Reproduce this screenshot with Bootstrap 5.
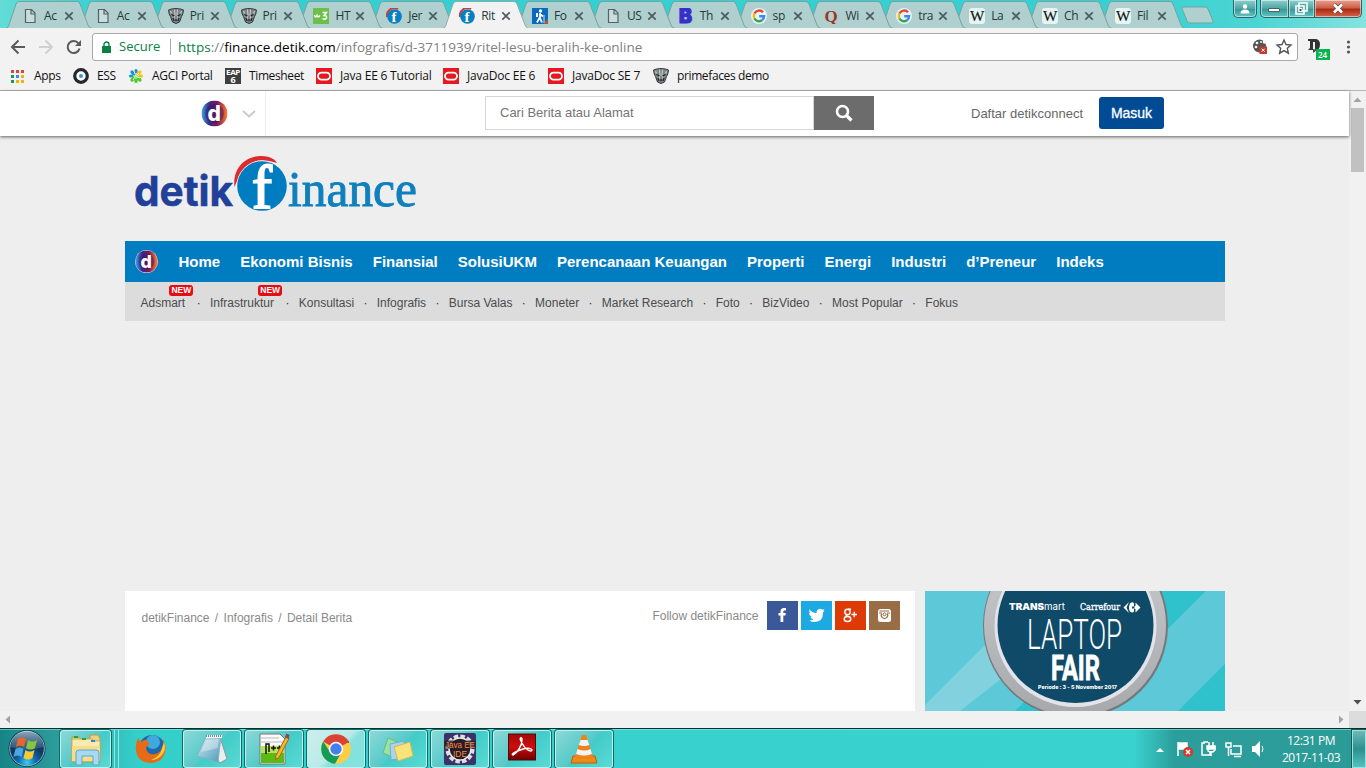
<!DOCTYPE html>
<html lang="id">
<head>
<meta charset="utf-8">
<title>Ritel Lesu, Beralih ke Online</title>
<link href="https://cdn.jsdelivr.net/npm/bootstrap@5.3.0/dist/css/bootstrap.min.css" rel="stylesheet">
<style>
html,body{height:100%;overflow:hidden}
body{font-family:"Liberation Sans",Arial,sans-serif;font-size:12px;line-height:1.2;width:1366px;height:768px;background:#eee}
svg{display:block;flex:none}
.ui{font-family:"Open Sans","Noto Sans",sans-serif}
/* tab strip */
.strip{height:28px;background:linear-gradient(90deg,#62dcd6 0,#35cfcf 8%,#36d0d2 80%,#4ad5d3 92%,#86e2df 100%);padding-left:6px;flex:none}
.btab{width:72.87px;height:28px;position:relative;isolation:isolate;flex:none;font-size:12px;letter-spacing:-.35px;color:#27393b;padding-left:16px}
.btab .shape{position:absolute;left:0;top:0;z-index:-1}
.btab .ttl{width:16px;margin-left:6px;white-space:nowrap}
.btab .x{margin-left:4px}
.wctl{height:18px;border:1px solid #276567;border-top:0;border-radius:0 0 5px 5px;box-shadow:inset 0 0 0 1px #ffffff80;background:linear-gradient(#8fcfce,#4da6a6 50%,#3a9797 55%,#62c4c3)}
.wctl.red{background:linear-gradient(#e9a08f,#cf6048 45%,#a92d12 55%,#d8634a)}
/* toolbar */
.toolbar{height:34px;background:#f2f2f2;flex:none}
.omni{width:1206px;height:28px;margin-left:10px;border:1px solid #a9a9a9;border-radius:3px;background:#fff;font-size:13.5px}
.sec{color:#0b8043;font-size:13px}
.url{color:#808080;letter-spacing:.01px;white-space:nowrap}
.bookmarks{height:29px;background:#f2f2f2;border-bottom:1px solid #b5b5b5;color:#111;flex:none;padding-left:10px;font-size:12px;letter-spacing:-.38px;white-space:nowrap}
.bookmarks .wide{letter-spacing:-.2px}
/* page */
.viewport{height:620px}
.page-area{width:1349px;background:#eee}
.topbar{height:45px;background:#fff;box-shadow:0 1px 3px #0009;position:relative;flex:none}
.brandbox{width:66px;margin-left:200px;border-right:1px solid #eee}
.searchbox{width:329px;height:34px;margin-left:219px;border:1px solid #d6d6d6;color:#757575;font-size:13px;padding-left:14px;margin-bottom:1px}
.searchbtn{width:60px;height:34px;background:#6c6c6c;margin-bottom:1px}
.masuk{width:65px;height:32px;margin-bottom:1px;background:#004b93;border-radius:3px;color:#fff;font-size:14px;-webkit-text-stroke:.3px #fff}
.wrap{width:1100px;margin-left:125px}
.mainnav{height:41px;background:#007dc1;color:#fff;font-size:15px;font-weight:700;padding-left:10px}
.subnav{height:39px;background:#dcdcdc;color:#4b4b4b;padding-left:15.5px;padding-top:4px}
.subnav .dot{width:22.6px;text-align:center;color:#333}
.hasnew{padding-right:2.2px}
.newtag{position:absolute;right:-6px;top:-11px;width:24px;height:11px;border-radius:3px;background:#e50c12;color:#fff;font-size:8.5px;line-height:11px;text-align:center}
.panel{width:790px;height:120px;background:#fff;padding:10px 15px 0 16.5px;color:#8a8a8a}
.soc{width:31px;height:29px}
.vbar{width:17px;background:#f1f1f1}
.vthumb{width:13px;height:64px;background:#c1c1c1}
.hbar{height:17px;background:#f1f1f1;flex:none}
/* taskbar */
.taskbar{height:40px;flex:none;border-top:1px solid #08312f;box-shadow:inset 0 1px #a3efec88;background:linear-gradient(90deg,#178586 0,#2c9b9a 4%,#35cfca 10%,#3ad2cf 83%,#2b9e9b 86%,#2c9b98 100%)}
.tb{width:58px;height:38px;border:1px solid #bff1ee;border-radius:3px;box-shadow:0 0 0 1px #0c6d6b;background:linear-gradient(135deg,#8bd9d7,#56cac9 48%,#42cbc8 52%,#5adad5);margin-right:4px;flex:none}
.tb.on{background:linear-gradient(135deg,#cdeeec,#b9ebe8 50%,#86e0dc 60%,#7fe5e0)}
.tb.plain{border-color:transparent;background:none;box-shadow:none}
.clock{width:80px;color:#fff;text-align:center;line-height:17px;letter-spacing:-.45px}
.peek{width:14px;height:38px;border:1px solid #9fe0dd;box-shadow:0 0 0 1px #135d5b;background:linear-gradient(#6bb9b7,#2b908e 50%,#52c3bf)}
</style>
</head>
<body class="d-flex flex-column">
<svg width="0" height="0" class="position-absolute">
<defs>
<linearGradient id="dg"><stop offset="0" stop-color="#35a3ef"/><stop offset=".3" stop-color="#3a2a86"/><stop offset=".6" stop-color="#7b1757"/><stop offset="1" stop-color="#ff7d2d"/></linearGradient>
<linearGradient id="ring" x2="0" y2="1"><stop offset="0" stop-color="#c9cbce"/><stop offset=".5" stop-color="#b9bbbe"/><stop offset="1" stop-color="#a6a8ab"/></linearGradient>
<radialGradient id="orb" cy=".9"><stop offset="0" stop-color="#36d2f6"/><stop offset=".5" stop-color="#0e6bb0"/><stop offset="1" stop-color="#12385f"/></radialGradient>
<linearGradient id="glass" x2="0" y2="1"><stop offset="0" stop-color="#e8f4f6" stop-opacity=".85"/><stop offset="1" stop-color="#8bb7c6" stop-opacity=".3"/></linearGradient>
<linearGradient id="pdfg" x2="0" y2="1"><stop offset="0" stop-color="#9e0b0b"/><stop offset=".5" stop-color="#d00c0c"/><stop offset="1" stop-color="#6e0000"/></linearGradient>
<linearGradient id="npg" x2="1" y2="1"><stop offset="0" stop-color="#d3ecf3"/><stop offset="1" stop-color="#4d9ab8"/></linearGradient>
<symbol id="doc" viewBox="0 0 16 16"><path d="M3.500 1.500h6l3.500 3.500v9.500h-9.500zM9 2v4h4" fill="#c8dddd" stroke="#566264" stroke-width="1.200"/></symbol>
<symbol id="prime" viewBox="0 0 16 16"><path d="M.5 2l3-1L8 .5l4.500.5 3 1-.7 4-1.300 2.500-2 5.500L8 15.500 4.500 14l-2-5.500L1.200 6z" fill="#7d8486" stroke="#33393b" stroke-width="1"/><path d="M2 3l2 1-1 2zM14 3l-2 1 1 2z" fill="#d5dada"/><path d="M6.500 1.500L7 7l-1.500 5M9.500 1.500L9 7l1.500 5" stroke="#cfd4d4" fill="none"/><path d="M3.500 6.500l3 1.500M12.500 6.500l-3 1.500M5 10l1 3M11 10l-1 3" stroke="#1d2122" fill="none" stroke-width="1.200"/><path d="M6.800 11.500h2.400L8 13.500z" fill="#111"/></symbol>
<symbol id="w3" viewBox="0 0 16 16"><path d="M0 0h16v16H0z" fill="#6cc04a"/><path d="M1.500 7q.5 3.500 2.500.5.500 3 3 0M9.500 4.500h4l-2.500 3q3 0 2.500 2.200-1 2.500-4 1" fill="none" stroke="#fff" stroke-width="1.500"/></symbol>
<symbol id="fin" viewBox="0 0 16 16"><path d="M1 9A7.500 7.500 0 0 1 12 1" stroke="#d93636" fill="none" stroke-width="2"/><circle cx="8.500" cy="8.500" r="7.300" fill="#087fc0"/><text x="5.500" y="14" font-family="Liberation Serif" font-weight="700" font-size="15" fill="#fff">f</text></symbol>
<symbol id="hike" viewBox="0 0 16 16"><path d="M0 0h16v16H0z" fill="#096bc0"/><path d="M11 16l5-5v5z" fill="#a65c31"/><circle cx="8.500" cy="3" r="1.700" fill="#fff"/><path d="M8 5v5l2 4.500M8 9l-3 5.500M8 6l3 2.500" fill="none" stroke="#fff" stroke-width="1.800"/><path d="M12 7v8" stroke="#fff" stroke-width=".8"/><path d="M4 5h2v4H4z" fill="#fff"/></symbol>
<symbol id="B" viewBox="0 0 16 16"><text x="1" y="15.200" font-family="Inter" font-weight="900" font-size="19.500" fill="#3530c9" stroke="#3530c9">B</text></symbol>
<symbol id="G" viewBox="0 0 16 16"><circle cx="8" cy="8" r="8" fill="#e6f4f3"/><g fill="none" stroke-width="2.400"><path d="M12 4.200A5.200 5.200 0 0 0 3.400 5.600" stroke="#e84436"/><path d="M3.400 5.600A5.400 5.400 0 0 0 3.400 10.500" stroke="#f7b90b"/><path d="M3.400 10.500A5.200 5.200 0 0 0 11 12.300" stroke="#35a553"/><path d="M11 12.300A5 5 0 0 0 13.100 8.300H8.200" stroke="#4385f4"/></g></symbol>
<symbol id="Q" viewBox="0 0 16 16"><text x="1.500" y="13.500" font-family="Liberation Serif" font-weight="700" font-size="17" fill="#9b3528">Q</text></symbol>
<symbol id="W" viewBox="0 0 16 16"><rect width="16" height="16" rx="3" fill="#e4f5f4"/><text x="1" y="12.800" textLength="14" lengthAdjust="spacingAndGlyphs" font-family="Liberation Serif" font-size="14" fill="#111" stroke="#111" stroke-width=".15">W</text></symbol>
<symbol id="X" viewBox="0 0 10 10"><path d="M1.300 1.300l7.400 7.400M8.700 1.300L1.300 8.700" stroke="#4c5b5d" stroke-width="1.700"/></symbol>
<symbol id="ora" viewBox="0 0 16 16"><path d="M0 0h16v16H0z" fill="#e5191f"/><rect x="2" y="4.600" width="12" height="7" rx="3.500" fill="none" stroke="#fff" stroke-width="1.800"/></symbol>
<symbol id="dlogo" viewBox="0 0 26 26"><circle cx="13" cy="13" r="13" fill="url(#dg)"/><circle cx="13" cy="13" r="9.500" fill="#36145f" opacity=".45"/><text x="6" y="20.500" font-family="Inter" font-weight="800" font-size="21" fill="#fff">d</text></symbol>
</defs></svg>

<div class="strip ui d-flex" id="strip">
  <svg class="order-last" width="36" height="28" style="margin-left:7px"><path d="M3 8.500q-1-1.500 1-1.500h22q2 0 3 2l5 12q1 2-1.500 2H11q-2 0-3-2z" fill="#b0d0cf" stroke="#6da5a4"/></svg>
  <div class="d-flex order-last" style="margin-left:18px">
    <div class="wctl d-flex justify-content-center align-items-center" style="width:24px"><svg width="10" height="11"><circle cx="5" cy="3.500" r="2.200" fill="#fff"/><path d="M.5 10.500q0-4 4.500-4t4.500 4z" fill="#fff"/></svg></div>
    <div class="wctl d-flex justify-content-center align-items-center rounded-end-0" style="width:29px;margin-left:3px"><svg width="12" height="9"><path d="M.5 4.500h11v3H.5z" fill="#fff" stroke="#466"/></svg></div>
    <div class="wctl d-flex justify-content-center align-items-center rounded-0" style="width:27px;margin-left:-1px"><svg width="13" height="13"><path d="M4 1h8v8H4zM1 4h8v8H1z" fill="#5cabab" stroke="#fff" stroke-width="1.600"/><path d="M4 6.500h3v3H4z" fill="#355" stroke="#fff"/></svg></div>
    <div class="wctl red d-flex justify-content-center align-items-center rounded-start-0" style="width:48px;margin-left:-1px"><svg width="12" height="11"><path d="M2 1.500l8 8M10 1.500l-8 8" stroke="#655" stroke-width="4"/><path d="M2 1.500l8 8M10 1.500l-8 8" stroke="#fff" stroke-width="2.500"/></svg></div>
  </div>
</div>

<div class="toolbar ui d-flex align-items-center pt-1">
  <svg width="82" height="28"><g fill="none" stroke-width="2"><path d="M25 14H12m6.500-6.500L12 14l6.500 6.500" stroke="#5a5a5a"/><path d="M39 14h13m-6.500-6.500L52 14l-6.500 6.500" stroke="#d0d0d0"/><path d="M78.500 10.500A6 6 0 1 0 79.500 15.500" stroke="#5a5a5a"/></g><path d="M81 7v6h-6z" fill="#5a5a5a"/></svg>
  <div class="omni d-flex align-items-center">
    <svg width="9" height="12" style="margin-left:9px"><path d="M0 5h9v7H0z" fill="#0b8043"/><path d="M2 6V3.500a2.500 2.500 0 0 1 5 0V6" fill="none" stroke="#0b8043" stroke-width="1.400"/></svg>
    <span class="sec" style="margin-left:8px;width:51px">Secure</span><span style="width:1px;height:16px;background:#aaa"></span>
    <span class="url" style="margin-left:7px"><span style="color:#0b8043">https</span>://<span class="text-black">finance.detik.com</span>/infografis/d-3711939/ritel-lesu-beralih-ke-online</span>
    <svg class="ms-auto" width="45" height="18" viewBox="0 0 45 18"><circle cx="7.500" cy="8" r="6.500" fill="#555"/><g fill="#f5f5f5"><circle cx="5" cy="5" r="1.300"/><circle cx="9" cy="4" r="1"/><circle cx="4" cy="9" r="1.300"/><circle cx="12.500" cy="4" r="1.800"/></g><path d="M7.500 8.500h7.500v7.500H7.500z" fill="#c6392f"/><path d="M9.700 10.700l3 3m0-3l-3 3" stroke="#fff"/><path d="M32 2l2 4.500 5 .5-3.700 3.300 1.100 4.900L32 12.600l-4.400 2.600 1.100-4.900L25 7l5-.5z" fill="none" stroke="#555" stroke-width="1.400"/></svg>
  </div>
  <svg width="66" height="30"><path d="M10 7h7q5 0 5 5.500t-5 5.500v-8h-2v8h-5l2-2v-7h-2z" fill="#333"/><path d="M15 17v4l4-3z" fill="#444"/><rect x="18" y="17" width="14" height="11" fill="#09b34d"/><text x="20" y="26" font-size="8" fill="#fff" font-weight="600">24</text><g fill="#555"><circle cx="50.500" cy="10" r="1.600"/><circle cx="50.500" cy="15" r="1.600"/><circle cx="50.500" cy="20" r="1.600"/></g></svg>
</div>

<div class="bookmarks ui d-flex align-items-center">
  <svg width="14" height="14"><g fill="#dc4437"><path d="M1 1h3v3H1zM6 1h3v3H6zM11 1h3v3h-3z"/></g><path d="M1 6h3v3H1z" fill="#109d58"/><path d="M6 6h3v3H6z" fill="#4385f4"/><path d="M11 6h3v3h-3zM6 11h3v3H6zM11 11h3v3h-3z" fill="#f4b400"/><path d="M1 11h3v3H1z" fill="#109d58"/></svg><span style="width:39px;margin-left:10px">Apps</span>
  <svg width="16" height="16"><circle cx="8" cy="8" r="6.300" fill="#fff" stroke="#24272b" stroke-width="3.200"/><circle cx="8" cy="8" r="2" fill="#3596dd"/></svg><span style="width:31px;margin-left:8px">ESS</span>
  <svg width="16" height="16"><g fill="none" stroke-width="3.200" stroke-linecap="round"><path d="M8 8V2.500M8 8L4 4" stroke="#2589dd"/><path d="M8 8H2.500" stroke="#169be0"/><path d="M8 8l4-4M8 8h5.500" stroke="#efc81c"/><path d="M8 8v5.500M8 8l-4 4M8 8l4 4" stroke="#4fc72f"/></g><path d="M8 5v6M5 8h6M6 3l1 3M11 5l-2 2M5 12l2-3M12 10l-3-1" stroke="#f1ffe0" stroke-width=".9"/></svg><span style="width:73px;margin-left:8px;letter-spacing:-.28px">AGCI Portal</span>
  <svg width="16" height="16"><path d="M0 0h16v16H0z" fill="#3e3e3e"/><text x="1" y="7" textLength="14" lengthAdjust="spacingAndGlyphs" font-size="7" font-weight="700" fill="#fff">EAP</text><text x="5.500" y="15" font-size="9" font-weight="700" fill="#fff">6</text></svg><span style="width:67px;margin-left:8px">Timesheet</span>
  <svg width="16" height="16"><use href="#ora"/></svg><span class="wide" style="width:103px;margin-left:8px">Java EE 6 Tutorial</span>
  <svg width="16" height="16"><use href="#ora"/></svg><span class="wide" style="width:81px;margin-left:8px">JavaDoc EE 6</span>
  <svg width="16" height="16"><use href="#ora"/></svg><span class="wide" style="width:81px;margin-left:8px">JavaDoc SE 7</span>
  <svg width="16" height="16"><use href="#prime"/></svg><span style="margin-left:8px">primefaces demo</span>
</div>

<div class="viewport d-flex flex-grow-0 flex-shrink-0">
  <div class="page-area d-flex flex-column">
    <header class="topbar d-flex align-items-center">
      <div class="brandbox d-flex align-items-center h-100"><svg width="28" height="27" viewBox="-1.500 -.5 28 27"><use href="#dlogo" width="26" height="26"/></svg><svg width="14" height="9" style="margin-left:14px"><path d="M1 2l6 5.500L13 2" fill="none" stroke="#c9c9c9" stroke-width="1.800"/></svg></div>
      <div class="searchbox d-flex align-items-center">Cari Berita atau Alamat</div>
      <div class="searchbtn d-flex align-items-center justify-content-center"><svg width="18" height="18"><circle cx="7.500" cy="7.500" r="5.500" fill="none" stroke="#fff" stroke-width="2.600"/><path d="M11.500 11.500l5 5" stroke="#fff" stroke-width="3.200"/></svg></div>
      <span style="font-size:13px;color:#666;margin-left:97px;width:128px">Daftar detikconnect</span>
      <div class="masuk d-flex align-items-center justify-content-center">Masuk</div>
    </header>
    <main class="wrap">
      <svg width="300" height="105"><text x="9" y="70" font-family="Inter" font-weight="700" font-size="41.500" textLength="99" lengthAdjust="spacingAndGlyphs" fill="#20409a" stroke="#20409a" stroke-width=".5">detik</text>
        <path d="M109.500 51C107 30 124 16 144 21Q150 23 152 27Q122 17 112 45z" fill="#dc2b2e"/><circle cx="137" cy="50" r="25.500" fill="#eee"/><circle cx="137" cy="50" r="24.800" fill="#007dc1"/><text x="127" y="72" font-family="Liberation Serif" font-size="62" textLength="20" lengthAdjust="spacingAndGlyphs" fill="#fff" stroke="#fff" stroke-width="2">f</text>
        <text x="163" y="70" font-family="Liberation Serif" font-size="50" textLength="129" lengthAdjust="spacingAndGlyphs" fill="#0f80bd" stroke="#0f80bd" stroke-width=".9">inance</text></svg>
      <nav class="mainnav d-flex align-items-center">
        <svg width="23" height="23" style="margin-right:20.500px"><circle cx="11.500" cy="11.500" r="11.500" fill="#dcb7d3"/><use href="#dlogo" x=".5" y=".5" width="22" height="22"/></svg>
        <div class="d-flex" style="gap:20px"><span>Home</span><span>Ekonomi Bisnis</span><span>Finansial</span><span>SolusiUKM</span><span>Perencanaan Keuangan</span><span>Properti</span><span>Energi</span><span>Industri</span><span>d’Preneur</span><span>Indeks</span></div>
      </nav>
      <nav class="subnav d-flex align-items-center">
        <span class="hasnew position-relative">Adsmart<b class="newtag">NEW</b></span><span class="dot">·</span><span class="hasnew position-relative">Infrastruktur<b class="newtag">NEW</b></span><span class="dot">·</span><span>Konsultasi</span><span class="dot">·</span><span>Infografis</span><span class="dot">·</span><span>Bursa Valas</span><span class="dot">·</span><span>Moneter</span><span class="dot">·</span><span>Market Research</span><span class="dot">·</span><span>Foto</span><span class="dot">·</span><span>BizVideo</span><span class="dot">·</span><span>Most Popular</span><span class="dot">·</span><span>Fokus</span>
      </nav>
      <div class="d-flex justify-content-between" style="margin-top:270px">
        <section class="panel d-flex align-items-start">
          <div style="padding-top:10px;word-spacing:2px">detikFinance / <span style="word-spacing:0">Infografis</span> / <span style="word-spacing:0">Detail Berita</span></div>
          <div class="d-flex ms-auto" style="gap:3px"><span style="padding:8px 5.500px 0 0">Follow detikFinance</span>
            <svg class="soc" style="background:#3b5998"><path d="M13.500 21v-6.500H11.500V12h2v-1.500q0-3.500 3.500-3.500h2v2.500h-1.500q-1.200 0-1.200 1.200V12h2.500l-.4 2.500h-2.100V21z" fill="#fff"/></svg>
            <svg class="soc" style="background:#1da9e1"><path d="M8.500 8.500q3 3.500 7 3.500 0-4 3.500-4.300 1.500 0 2.500 1l2-.8-1.200 2 1.200-.2-1.500 1.700q.2 9.200-8.500 9.600-3 0-5.200-1.500 2.600 0 4.200-1.300-2.400-.3-3-2.300h1.300Q8 14.500 8 12l1.300.3Q7.500 10.500 8.500 8.500z" fill="#fff"/></svg>
            <svg class="soc" style="background:#de3a06"><g fill="none" stroke="#fff" stroke-width="1.400"><circle cx="12.500" cy="11" r="2.700"/><ellipse cx="12.500" cy="18" rx="3.300" ry="2.500"/><path d="M13 8.200h3M13 13.500q-3 .5-1 2M16.500 13.500H22M19.300 10.800v5.500"/></g></svg>
            <svg class="soc" style="background:#996e44"><rect x="9" y="8" width="13" height="13" rx="2.500" fill="#fff"/><path d="M10 12h3M18 12h3M10.500 10h9.500" stroke="#996e44" stroke-width="1.100"/><path d="M12.800 12.500a3.200 3.200 0 1 0 5.400 0" fill="none" stroke="#996e44" stroke-width="1.200"/><circle cx="15.500" cy="13.300" r="1.500" fill="none" stroke="#996e44"/></svg>
          </div>
        </section>
        <svg width="300" height="120"><path d="M0 0h300v120H0z" fill="#5cc8d8"/><path d="M0 114L114 0h75L35 120H0z" fill="#82d1de"/><path d="M90 120L210 0h71L160 120z" fill="#2fc1cc"/><path d="M281 0h19v73l-47 47h-93z" fill="#5cc8d8"/><path d="M300 73v47h-47z" fill="#2fc1cc"/>
          <circle cx="150.500" cy="34.500" r="92.500" fill="#77787b"/><circle cx="150" cy="34" r="91" fill="url(#ring)"/><circle cx="150.500" cy="35" r="81" fill="#e2e4ea"/><circle cx="150.500" cy="34" r="78" fill="#0f4b68"/>
          <g fill="#fff"><text x="84" y="19" font-family="Inter" font-size="9.500" textLength="56" lengthAdjust="spacingAndGlyphs"><tspan font-weight="900">TRANS</tspan>mart</text><text x="155" y="19" font-family="DejaVu Serif" font-size="8.500" textLength="40" lengthAdjust="spacingAndGlyphs" stroke="#fff" stroke-width=".3">Carrefour</text>
          <path d="M204 11l-5.500 5.500 5.500 5.500-2.500-5.500zM205 12.500q2.500-2.500 4 0v3h-2v2h2v3q-1.500 2-4 0-2-4 0-8zM210.500 11.500l5 5-5 5v-3.500h-1v-3h1z"/>
          <text x="102" y="58" font-family="Roboto" font-weight="300" font-size="42" textLength="95" lengthAdjust="spacingAndGlyphs">LAPTOP</text>
          <text x="126" y="89" font-family="Roboto" font-weight="700" font-size="35.500" textLength="49" lengthAdjust="spacingAndGlyphs" stroke="#fff" stroke-width=".8">FAIR</text>
          <text x="113" y="98" font-family="Inter" font-weight="800" font-size="5.200" textLength="79" lengthAdjust="spacingAndGlyphs">Periode : 3 - 5 November 2017</text></g></svg>
      </div>
    </main>
  </div>
  <div class="vbar d-flex flex-column align-items-center"><svg width="17" height="17"><path d="M4.500 11h8l-4-4.500z" fill="#a3a3a3"/></svg><div class="vthumb"></div><svg class="mt-auto" width="17" height="17"><path d="M4.500 6h8l-4 4.500z" fill="#505050"/></svg></div>
</div>
<div class="hbar d-flex justify-content-between"><svg width="17" height="17"><path d="M10 4.500v8L5.500 8.500z" fill="#a3a3a3"/></svg><div class="d-flex"><svg width="17" height="17"><path d="M7 4.500v8l4.500-4z" fill="#a3a3a3"/></svg><span style="width:17px;background:#dcdcdc"></span></div></div>

<div class="taskbar d-flex align-items-center">
  <svg width="60" height="39"><circle cx="27" cy="19.500" r="18.500" fill="#0b3050"/><circle cx="27" cy="19.500" r="17.300" fill="url(#orb)" stroke="#8fb9cb"/><path d="M11 18a16 16 0 0 1 32 0q-16 5-32 0z" fill="url(#glass)" opacity=".7"/><path d="M18 10q4-3 8 0l-2 8q-4-3-8 0z" fill="#ed632c"/><path d="M28 11q4 3 9 0l-2 8q-4 3-9 0z" fill="#87c440"/><path d="M15.500 20q4-3 8 0l-2 8q-4-3-8 0z" fill="#4ba7e3"/><path d="M25.500 21q4 3 9 0l-2 8q-4 3-9 0z" fill="#fcc92f"/></svg>
  <div class="tb d-flex justify-content-center align-items-center" style="width:51px;margin-right:0"><svg width="34" height="34" viewBox="0 0 34 34"><path d="M3 5h7l2 2h9V3h8l2 3v24H3z" fill="#e8d283" stroke="#b89b46"/><path d="M3 7h20l2 2h6v20H3z" fill="#f7ebb0" stroke="#c8ae5d"/><path d="M5 4h4v2H5zM13 6h4v2h-4z" fill="#2f9d3a"/><path d="M22 8h4v2h-4z" fill="#3a7bd0"/><path d="M3 14h28v15H3z" fill="#f5dd8d"/><path d="M7 33V21q0-3 3-3h17q3 0 3 3v12h-6v-9H13v9z" fill="#a6daf1" stroke="#5fa5cd"/></svg></div>
  <span style="width:4px;height:38px;border-right:1px solid #9be6e3"></span><span style="width:4px;height:38px;border-right:1px solid #9be6e3"></span>
  <div class="tb plain d-flex justify-content-center align-items-center" style="margin-left:3px"><svg width="32" height="32" viewBox="0 0 32 32"><circle cx="17" cy="15" r="13" fill="#1c68ad"/><circle cx="18" cy="9" r="7" fill="#3fa9db"/><path d="M28 6q5 8 1 16-4 8-13 8Q3 30 1 18q-1-6 2-13l3 4q3-3 7-2-2 2 2 4-4 2-4 5 3 8 12 4 7-5 5-14z" fill="#e66b18"/><path d="M29 9q3 8-3 14-4 4-10 4 10-4 11-12z" fill="#ffc935"/></svg></div>
  <div class="tb d-flex justify-content-center align-items-center" style="margin-left:-1px"><svg width="32" height="34"><path d="M24 5l7 22-7 4-4-5z" fill="#eceeeb" stroke="#8a9899"/><path d="M10 5h15l-3 25-21-6z" fill="url(#npg)" stroke="#7fb1c4" stroke-width=".8"/><path d="M10 8l13-1-1.500 9L5 20z" fill="#fff" opacity=".35"/><path d="M10 4.500h16" stroke="#f5f5f5" stroke-width="3"/><path d="M10 4h16" stroke="#788a8e" stroke-width="2" stroke-dasharray="1 1"/></svg></div>
  <div class="tb d-flex justify-content-center align-items-center"><svg width="32" height="34"><path d="M2 2h20l5 5v25H2z" fill="#fafafa" stroke="#777"/><path d="M3 14h23v17H3z" fill="#b5e35a"/><path d="M3 21h23v10H3z" fill="#5cba17"/><path d="M3 6h18M3 10h22" stroke="#bbb"/><path d="M8 22V12h3v8M13 16h5m-2.500-2.500v5M19 16h5m-2.500-2.500v5" stroke="#111" fill="none" stroke-width="1.500"/><path d="M28 5l3 1.500-10 19-3.500 2 .5-4z" fill="#f1b832" stroke="#a36616"/><path d="M28.500 1.500l3 1.500-1 4-3.500-2z" fill="#944"/></svg></div>
  <div class="tb on d-flex justify-content-center align-items-center"><svg width="30" height="30"><circle cx="15" cy="15" r="14.800" fill="#ffcd42"/><path d="M15 15L2.200 7.500A14.800 14.800 0 0 1 28 8z" fill="#d94437"/><path d="M2.200 7.500A14.800 14.800 0 0 0 14 29.700L20 19 9 18z" fill="#119c58"/><path d="M15 8h13" stroke="#d94437" stroke-width="2"/><circle cx="15" cy="15" r="7.200" fill="#fff"/><circle cx="15" cy="15" r="5.700" fill="#4380eb"/></svg></div>
  <div class="tb d-flex justify-content-center align-items-center"><svg width="34" height="32"><path d="M7 5l14 6-7 14-12-5z" fill="#9be3a0" stroke="#65bc7e"/><path d="M9 11l14-3 1 17-14 2z" fill="#a8d5f4" stroke="#73abd0"/><path d="M13 14l16-5 3 14-15 5z" fill="#f8e27a" stroke="#d7b94d"/></svg></div>
  <div class="tb d-flex justify-content-center align-items-center"><svg width="32" height="32"><rect width="32" height="32" rx="2" fill="#3d3268"/><circle cx="16" cy="16" r="12.800" fill="none" stroke="#ddd" stroke-width="3.500" stroke-dasharray="4.500 2.200"/><circle cx="16" cy="16" r="11" fill="#251e28" stroke="#e8e8e8" stroke-width="1.500"/><path d="M0 7.500h32v8H0z" fill="#2a1b28" opacity=".8"/><g font-family="Liberation Sans" fill="#f58b3b"><text x="1" y="15" font-size="9.500" textLength="30" lengthAdjust="spacingAndGlyphs">Java EE</text><text x="9" y="24" font-size="9" textLength="14" lengthAdjust="spacingAndGlyphs">IDE</text></g></svg></div>
  <div class="tb d-flex justify-content-center align-items-center"><svg width="28" height="31"><rect x=".5" y="1" width="27" height="26" fill="url(#pdfg)" stroke="#540909"/><path d="M5 22c4-2 9-9 9-15 0-4-3-2-1 1 2 5 6 10 10 10 3-1-1-4-8-2-6 2-13 5-10 6z" fill="none" stroke="#fff" stroke-width="1.400"/></svg></div>
  <div class="tb d-flex justify-content-center align-items-center"><svg width="28" height="32"><path d="M3 23h22l2 7H1z" fill="#f08a14" stroke="#bc6007"/><path d="M12 2h4l7 22q-9 4-18 0z" fill="#ee8419"/><path d="M10.500 7h7l1.800 5q-5 2-10.500 0zM7.500 16q7 3 13 0l1.500 5q-8 3-16 0z" fill="#f4f4f4"/></svg></div>
  <div class="d-flex ms-auto align-items-center" style="margin-right:1px">
    <svg width="118" height="22"><path d="M5 14h8l-4-4z" fill="#fff"/><g fill="none" stroke="#fff" stroke-width="1.500"><path d="M27 4v14"/><path d="M28 5h8v6h-8z" fill="#fff"/><path d="M54 5h-3v12h8v-3M53 5v-1h4M57 8v5q4 3 7-1V8M58 4v4M62 4v4M60 13v5" /><path d="M56 8h8v3h-8z" fill="#fff"/><path d="M82 8h8v8H80v-5M83 18.500h7M75 5h5v4h-5zM77.500 9v9"/></g><circle cx="37" cy="14" r="5" fill="#d33b2e"/><path d="M35 12l4 4m0-4l-4 4" stroke="#fff" stroke-width="1.500"/><path d="M101 8h3l5-5v16l-5-5h-3z" fill="#fff"/><path d="M111 8q2 3 0 6" stroke="#fff" fill="none"/></svg>
    <div class="clock ui" style="margin-left:2px">12:31 PM<br>2017-11-03</div>
  </div>
  <div class="peek"></div>
</div>

<script>
const tabs=[['doc','Ac'],['doc','Ac'],['prime','Pri'],['prime','Pri'],['w3','HT'],['fin','Jer'],['fin','Rit'],['hike','Fo'],['doc','US'],['B','Th'],['G','sp'],['Q','Wi'],['G','tra'],['W','La'],['W','Ch'],['W','Fil']];
const strip=document.getElementById('strip');
tabs.forEach(([icon,title],i)=>{
  const on=i===6;
  const t=document.createElement('div');
  t.className='btab d-flex align-items-center pt-1';
  t.style.zIndex=on?40:30-i;
  t.innerHTML=`<svg class="shape" width="88" height="28"><path d="M0 28.500Q2 28 3 25L10 4Q11 1.500 13 1.500H71Q73 1.500 74 4L82 25Q83 28 86 28.500" fill="${on?'#f2f2f2':'#b0cfcf'}" stroke="${on?'#92aaa9':'#76a3a2'}"/></svg><svg width="16" height="16"><use href="#${icon}"/></svg><span class="ttl">${title}</span><svg class="x" width="10" height="10"><use href="#X"/></svg>`;
  strip.appendChild(t);
});
</script>
<script src="https://cdn.jsdelivr.net/npm/bootstrap@5.3.0/dist/js/bootstrap.bundle.min.js"></script>
</body>
</html>
